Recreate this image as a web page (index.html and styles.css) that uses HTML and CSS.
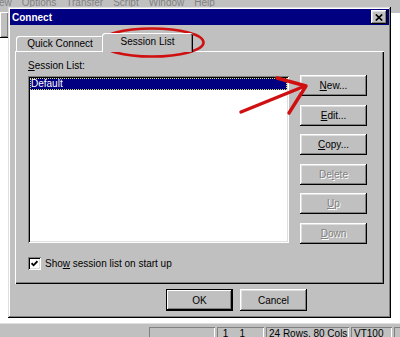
FILE: index.html
```html
<!DOCTYPE html>
<html lang="en">
  <head>
    <meta charset="UTF-8" />
    <meta name="viewport" content="width=device-width, initial-scale=1.0" />
    <title>Connect</title>
    <link rel="stylesheet" href="styles.css">
  </head>
  <body>
    <!-- terminal window behind the dialog -->
    <div class="app">
      <div class="menubar">
        <span>ew</span>
        <span>Options</span>
        <span>Transfer</span>
        <span>Script</span>
        <span>Window</span>
        <span>Help</span>
      </div>
      <div class="toolbar">
        <div class="tool-btn"></div>
        <div class="tool-edge"></div>
      </div>
      <div class="terminal"></div>
      <div class="statusbar">
        <div class="panel" style="width: 66px"></div>
        <div class="panel" style="width: 47px"> 1    1</div>
        <div class="panel" style="width: 83px">24 Rows, 80 Cols</div>
        <div class="panel" style="width: 41px">VT100</div>
        <div class="panel" style="width: 30px"></div>
      </div>
    </div>

    <div class="dialog">
      <div class="titlebar">
        <span>Connect</span>
        <button class="close-btn">
          <svg width="8" height="7" viewBox="0 0 8 7">
            <path d="M0.8 0.5 L7.2 6.5 M7.2 0.5 L0.8 6.5" stroke="#000" stroke-width="1.7" fill="none" />
          </svg>
        </button>
      </div>

      <div class="dialog-body">
        <div class="tabs">
          <div class="tab">Quick Connect</div>
          <div class="tab active">Session List</div>
        </div>

        <div class="tab-panel">
          <div class="session-row">
            <div class="session-col">
              <div class="label"><u>S</u>ession List:</div>
              <div class="listbox">
                <div class="list-item selected">Default</div>
              </div>
            </div>
            <div class="side-buttons">
              <button class="btn"><u>N</u>ew...</button>
              <button class="btn"><u>E</u>dit...</button>
              <button class="btn"><u>C</u>opy...</button>
              <button class="btn" disabled>De<u>l</u>ete</button>
              <button class="btn" disabled><u>U</u>p</button>
              <button class="btn" disabled><u>D</u>own</button>
            </div>
          </div>

          <div class="check-row">
            <span class="checkbox">
              <svg width="7" height="7" viewBox="0 0 7 7">
                <path d="M0.6 3.2 L2.6 5.3 L6.4 1.2" stroke="#000" stroke-width="1.8" fill="none" />
              </svg>
            </span>
            <span>Sho<u>w</u> session list on start up</span>
          </div>
        </div>

        <div class="dialog-footer">
          <button class="btn default">OK</button>
          <button class="btn">Cancel</button>
        </div>
      </div>
    </div>

    <!-- red hand-drawn annotations -->
    <svg class="markup" width="400" height="337" viewBox="0 0 400 337">
      <ellipse cx="152" cy="42.5" rx="51.5" ry="14" fill="none" stroke="#d01010" stroke-width="2.6" />
      <path d="M241 112 L305 86" stroke="#d01010" stroke-width="3.4" stroke-linecap="round" fill="none" />
      <path d="M277 78 L306 86 L289 113" stroke="#d01010" stroke-width="3.4" stroke-linecap="round" stroke-linejoin="round" fill="none" />
    </svg>
  </body>
</html>
```

FILE: styles.css
```css
* {
  box-sizing: border-box;
}
html,
body {
  margin: 0;
  padding: 0;
}
body {
  position: relative;
  width: 400px;
  height: 337px;
  overflow: hidden;
  font-family: "Liberation Sans", Arial, sans-serif;
  font-size: 10px;
  color: #000;
  background: #c0c0c0;
}
u {
  text-decoration-thickness: 1px;
  text-underline-offset: 1px;
}

/* background app */
.app {
  display: flex;
  flex-direction: column;
  height: 345px;
}
.menubar {
  display: flex;
  align-items: flex-end;
  gap: 10px;
  height: 8px;
  margin-left: -1px;
  overflow: hidden;
  line-height: 10px;
  color: #808080;
  white-space: nowrap;
}
.toolbar {
  display: flex;
  justify-content: space-between;
  align-items: flex-start;
  height: 30px;
}
.tool-btn {
  width: 9px;
  height: 26px;
  margin-top: 4px;
  box-shadow: inset -1px -1px #000, inset 1px 1px #fff, inset -2px -2px #808080;
}
.tool-edge {
  width: 10px;
  height: 25px;
  margin-top: 5px;
  background: #fff;
}
.terminal {
  flex: 1;
  background: #fff;
}
.statusbar {
  display: flex;
  gap: 2px;
  height: 22px;
  padding: 3px 0 0 149px;
  border-top: 1px solid #dfdfdf;
}
.panel {
  flex: none;
  height: 16px;
  padding: 1px 3px;
  line-height: 12px;
  white-space: pre;
  box-shadow: inset 1px 1px #808080, inset -1px -1px #fff;
}

/* dialog */
.dialog {
  position: absolute;
  left: 8px;
  top: 7px;
  width: 383px;
  height: 311px;
  padding: 2px;
  background: #c0c0c0;
  box-shadow: inset -1px -1px #000, inset 1px 1px #dfdfdf, inset -2px -2px #808080,
    inset 2px 2px #fff;
}
.titlebar {
  display: flex;
  justify-content: space-between;
  align-items: center;
  height: 16px;
  padding: 0 2px;
  background: #000080;
  color: #fff;
  font-weight: bold;
}
.close-btn {
  display: flex;
  align-items: center;
  justify-content: center;
  width: 16px;
  height: 14px;
  padding: 0;
  border: none;
  background: #c0c0c0;
  box-shadow: inset -1px -1px #000, inset 1px 1px #fff, inset -2px -2px #808080,
    inset 2px 2px #dfdfdf;
}
.dialog-body {
  padding: 8px 5px 0;
}
.tabs {
  position: relative;
  z-index: 1;
  display: flex;
  align-items: flex-end;
  height: 18px;
  padding-left: 1px;
}
.tab {
  width: 88px;
  height: 15px;
  line-height: 15px;
  text-align: center;
  background: #c0c0c0;
  border-radius: 3px 3px 0 0;
  box-shadow: inset 1px 1px #fff, inset -1px 0 #000, inset -2px 0 #808080;
}
.tab.active {
  width: 91px;
  height: 19px;
  margin-left: -2px;
  margin-bottom: -1px;
  line-height: 17px;
  box-shadow: inset 1px 1px #fff, inset -1px 0 #000, inset -2px 0 #808080;
}
.tab-panel {
  height: 233px;
  padding: 9px 16px 0 13px;
  box-shadow: inset 1px 1px #fff, inset -1px -1px #000, inset -2px -2px #808080;
}
.session-row {
  display: flex;
  gap: 11px;
}
.session-col {
  width: 261px;
}
.label {
  height: 12px;
  line-height: 12px;
}
.listbox {
  height: 167px;
  margin-top: 4px;
  padding: 2px;
  background: #fff;
  box-shadow: inset 1px 1px #808080, inset -1px -1px #fff, inset 2px 2px #000,
    inset -2px -2px #dfdfdf;
}
.list-item {
  height: 12px;
  padding-left: 1px;
  line-height: 12px;
}
.list-item.selected {
  background: #000080;
  color: #fff;
  outline: 1px dotted #e0e060;
  outline-offset: -1px;
}
.side-buttons {
  display: flex;
  flex-direction: column;
  gap: 8.6px;
  margin-top: 15px;
}
.btn {
  width: 67px;
  height: 21px;
  padding: 0;
  border: none;
  font: inherit;
  color: #000;
  background: #c0c0c0;
  box-shadow: inset -1px -1px #000, inset 1px 1px #fff, inset -2px -2px #808080,
    inset 2px 2px #dfdfdf;
}
.btn:disabled {
  color: #808080;
  text-shadow: 1px 1px #fff;
}
.btn.default {
  box-shadow: inset 0 0 0 1px #000, inset -2px -2px #000, inset 2px 2px #fff,
    inset -3px -3px #808080;
}
.check-row {
  display: flex;
  align-items: center;
  gap: 4px;
  height: 13px;
  margin-top: 13px;
}
.checkbox {
  display: flex;
  align-items: center;
  justify-content: center;
  width: 13px;
  height: 13px;
  background: #fff;
  box-shadow: inset 1px 1px #808080, inset -1px -1px #fff, inset 2px 2px #000,
    inset -2px -2px #dfdfdf;
}
.dialog-footer {
  display: flex;
  gap: 7px;
  margin-top: 5px;
  padding-left: 151px;
}
.dialog-footer .btn {
  height: 22px;
}

/* annotation overlay */
.markup {
  position: absolute;
  left: 0;
  top: 0;
  pointer-events: none;
}
```
